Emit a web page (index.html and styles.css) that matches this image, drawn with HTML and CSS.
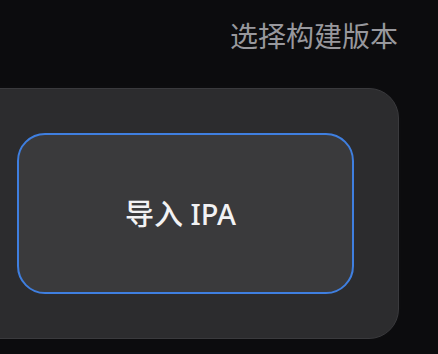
FILE: index.html
```html
<!DOCTYPE html>
<html lang="zh-CN">
  <head>
    <meta charset="UTF-8" />
    <meta name="viewport" content="width=device-width, initial-scale=1.0" />
    <title>导入 IPA</title>
    <link rel="stylesheet" href="styles.css">
  </head>
  <body>
    <div class="header">
      <span class="header-title">选择构建版本</span>
    </div>

    <div class="card">
      <button class="import-button">导入 IPA</button>
    </div>
  </body>
</html>
```

FILE: styles.css
```css
body {
  margin: 0;
  background-color: #0c0c0e;
  font-family: "Noto Sans", "Noto Sans CJK SC", sans-serif;
  overflow: hidden;
}

.header {
  display: flex;
  justify-content: flex-end;
  padding: 16px 40px 0 0;
  height: 40px;
}

.header-title {
  font-size: 28px;
  line-height: 40px;
  color: #98989d;
}

.card {
  margin: 32px 39px 0 -40px;
  padding: 44px 44px 44px 56px;
  background: #2c2c2e;
  border: 1px solid #3a3a3d;
  border-radius: 30px;
  box-shadow: 0 0 16px rgba(255, 255, 255, 0.02);
}

.import-button {
  display: flex;
  align-items: center;
  justify-content: center;
  width: 100%;
  height: 161px;
  box-sizing: border-box;
  padding: 0 10px 3px 0;
  background: #3a3a3c;
  border: 2px solid #3f7fe0;
  border-radius: 28px;
  color: #f2f2f4;
  font-family: "Noto Sans", "Noto Sans CJK SC", sans-serif;
  font-size: 29px;
  font-weight: 500;
  cursor: pointer;
}
```
